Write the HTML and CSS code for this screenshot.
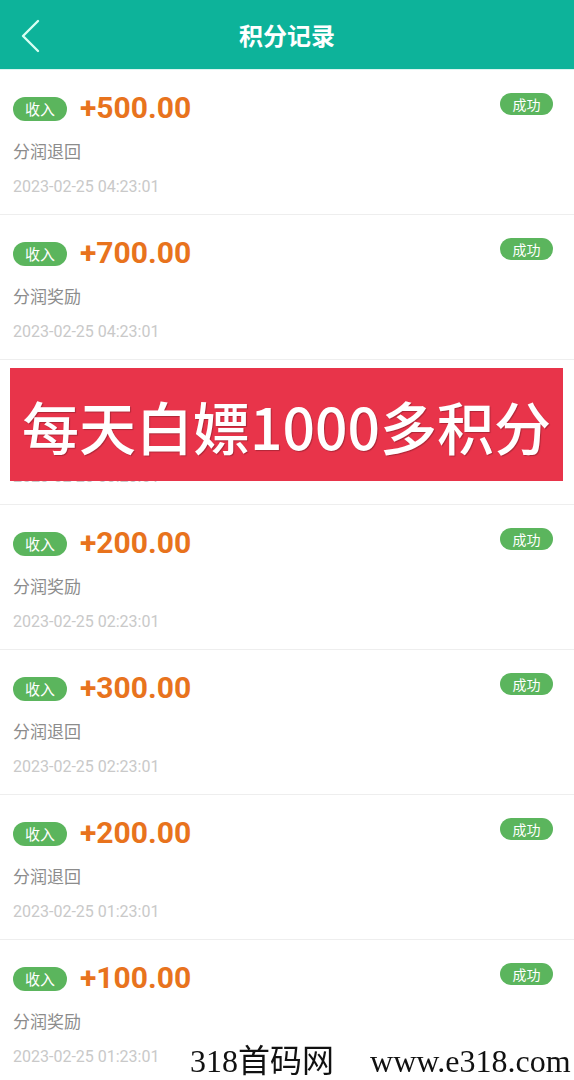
FILE: index.html
```html
<!DOCTYPE html>
<html lang="zh">
<head>
    <meta charset="UTF-8">
    <meta name="viewport" content="width=device-width, initial-scale=1.0">
    <title>积分记录</title>
    <link rel="stylesheet" href="styles.css">
</head>
<body>

    <!-- 顶部导航 -->
    <div class="header">
        <span class="back-btn">
            <svg width="20" height="34" viewBox="0 0 20 34">
                <polyline points="17,2 2,17 17,32" fill="none" stroke="#d8fff3" stroke-width="2.4" stroke-linecap="round" stroke-linejoin="round"/>
            </svg>
        </span>
        <div class="title">积分记录</div>
    </div>

    <!-- 记录列表 -->
    <div class="list">
        <div class="item">
            <div class="item-top">
                <span class="tag">收入</span>
                <span class="amount">+500.00</span>
                <span class="status">成功</span>
            </div>
            <div class="desc">分润退回</div>
            <div class="time">2023-02-25 04:23:01</div>
        </div>
        <div class="item">
            <div class="item-top">
                <span class="tag">收入</span>
                <span class="amount">+700.00</span>
                <span class="status">成功</span>
            </div>
            <div class="desc">分润奖励</div>
            <div class="time">2023-02-25 04:23:01</div>
        </div>
        <div class="item item-banner">
            <div class="item-top covered">
                <span class="tag">收入</span>
                <span class="amount">+100.00</span>
                <span class="status">成功</span>
            </div>
            <div class="desc covered">分润奖励</div>
            <div class="time">2023-02-25 03:23:01</div>
            <div class="banner">每天白嫖1000多积分</div>
        </div>
        <div class="item">
            <div class="item-top">
                <span class="tag">收入</span>
                <span class="amount">+200.00</span>
                <span class="status">成功</span>
            </div>
            <div class="desc">分润奖励</div>
            <div class="time">2023-02-25 02:23:01</div>
        </div>
        <div class="item">
            <div class="item-top">
                <span class="tag">收入</span>
                <span class="amount">+300.00</span>
                <span class="status">成功</span>
            </div>
            <div class="desc">分润退回</div>
            <div class="time">2023-02-25 02:23:01</div>
        </div>
        <div class="item">
            <div class="item-top">
                <span class="tag">收入</span>
                <span class="amount">+200.00</span>
                <span class="status">成功</span>
            </div>
            <div class="desc">分润退回</div>
            <div class="time">2023-02-25 01:23:01</div>
        </div>
        <div class="item">
            <div class="item-top">
                <span class="tag">收入</span>
                <span class="amount">+100.00</span>
                <span class="status">成功</span>
            </div>
            <div class="desc">分润奖励</div>
            <div class="time">2023-02-25 01:23:01</div>
        </div>
    </div>

    <!-- 水印 -->
    <div class="watermark">
        <span>318首码网</span>
        <span>www.e318.com</span>
    </div>

</body>
</html>
```

FILE: styles.css
```css
body {
    margin: 0;
    font-family: Roboto, "Noto Sans CJK SC", sans-serif;
    background-color: #fff;
}
/* 顶部导航 */
.header {
    height: 69px;
    background: #0db39a;
    display: flex;
    align-items: center;
    justify-content: center;
    position: relative;
    border-bottom: 1px solid #d9f6f1;
}
.back-btn {
    position: absolute;
    left: 21px;
    top: 19px;
    width: 20px;
    height: 34px;
}
.title {
    color: #fff;
    font-size: 24px;
    font-weight: bold;
    font-family: "Noto Sans CJK SC", sans-serif;
}
/* 列表 */
.item {
    padding: 19px 21px 15px 13px;
    border-bottom: 1px solid #eeeeee;
}
.item-top {
    display: flex;
    align-items: center;
    height: 36px;
}
.tag {
    width: 54px;
    height: 24px;
    line-height: 24px;
    border-radius: 12px;
    background: #5bb55d;
    color: #fff;
    font-size: 15px;
    text-align: center;
    font-family: "Noto Sans CJK SC", sans-serif;
    margin-top: 4px;
}
.amount {
    margin-left: 13px;
    color: #e8731d;
    font-size: 30px;
    font-weight: bold;
}
.status {
    margin-left: auto;
    align-self: flex-start;
    margin-top: 4px;
    width: 53px;
    height: 22px;
    line-height: 22px;
    border-radius: 11px;
    background: #5bb55d;
    color: #fff;
    font-size: 14px;
    text-align: center;
    font-family: "Noto Sans CJK SC", sans-serif;
}
.desc {
    margin-top: 15px;
    line-height: 24px;
    font-size: 17px;
    color: #8c8c8c;
}
.time {
    margin-top: 11px;
    line-height: 24px;
    font-size: 16px;
    color: #c9c9c9;
}
/* 广告横幅 */
.item-banner {
    position: relative;
}
.covered {
    visibility: hidden;
}
.banner {
    position: absolute;
    top: 8px;
    left: 10px;
    width: 553px;
    height: 113px;
    background: #e8344a;
    color: #fff;
    font-family: "Noto Sans CJK SC", sans-serif;
    font-weight: 500;
    font-size: 57px;
    display: flex;
    align-items: center;
    justify-content: center;
    text-shadow: 1px 1px 1px rgba(0, 0, 0, 0.25);
}
/* 水印 */
.watermark {
    position: fixed;
    left: 190px;
    bottom: 0;
    display: flex;
    gap: 36px;
    white-space: nowrap;
    font-family: "Liberation Serif", "Noto Sans CJK SC", serif;
    font-size: 32px;
    line-height: 38px;
    color: #111;
}
```
